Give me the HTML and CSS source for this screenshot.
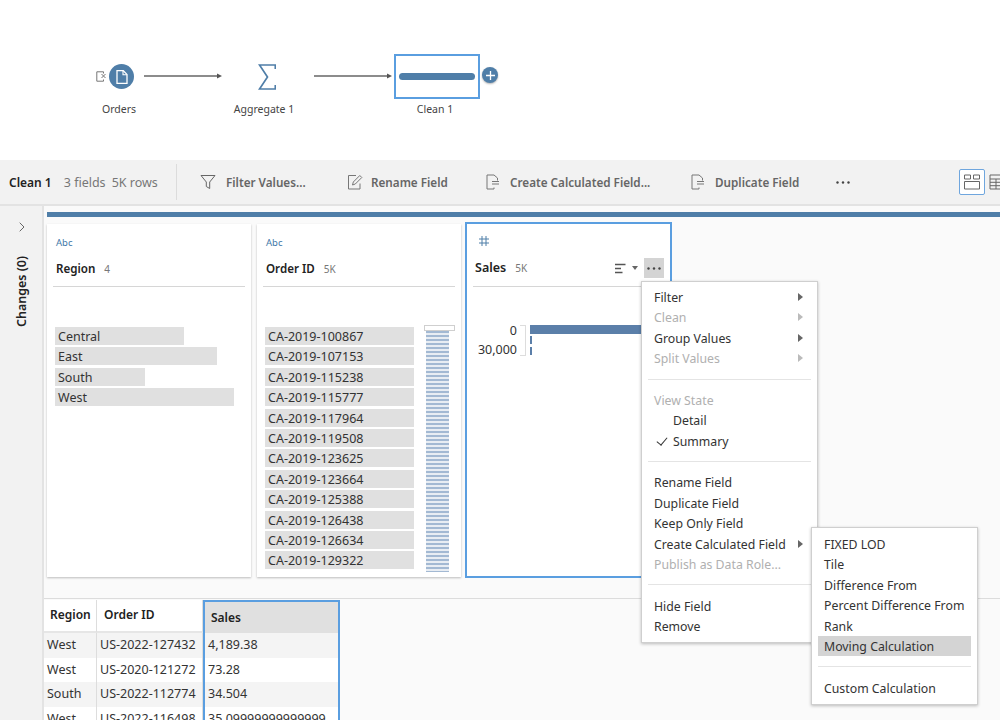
FILE: index.html
```html
<!DOCTYPE html>
<html lang="en">
<head>
<meta charset="utf-8">
<title>Clean 1</title>
<link rel="stylesheet" href="styles.css">
</head>
<body>
<div class="app">
  <section class="flow">
    <svg class="node-input" viewBox="0 0 11 11" width="11" height="11"><path d="M7.500 2.500V.8H.8v9.400h6.700V8.500" fill="none" stroke="#777" stroke-width="1"/><path d="M5.500 3l4 4M9.500 3l-4 4" stroke="#777" stroke-width="1" fill="none"/></svg>
    <div class="node-circle"><svg viewBox="0 0 12 14" width="12" height="14"><path d="M1 .7h6.300L11 4.400v8.900H1z" fill="none" stroke="#fff" stroke-width="1.300"/><path d="M7 .7v4h4" fill="none" stroke="#fff" stroke-width="1.100"/></svg></div>
    <svg class="edge edge-a" viewBox="0 0 78 8" width="78" height="8"><path d="M0 4h75" stroke="#666" stroke-width="1.500"/><path d="M73 1.500L78 4l-5 2.500z" fill="#555"/></svg>
    <svg class="node-sigma" viewBox="0 0 18 26" width="18" height="26"><path d="M17.300 5V1H1.500L9.500 13 1.500 25h15.800v-4" fill="none" stroke="#4f7ea8" stroke-width="1.700"/></svg>
    <svg class="edge edge-b" viewBox="0 0 78 8" width="78" height="8"><path d="M0 4h75" stroke="#666" stroke-width="1.500"/><path d="M73 1.500L78 4l-5 2.500z" fill="#555"/></svg>
    <div class="node-clean"><div class="node-clean-bar"></div></div>
    <div class="node-plus"><svg viewBox="0 0 9 9" width="9" height="9"><path d="M4.500 0v9M0 4.500h9" stroke="#fff" stroke-width="1.300"/></svg></div>
    <span class="node-label label-orders">Orders</span>
    <span class="node-label label-aggregate">Aggregate 1</span>
    <span class="node-label label-clean">Clean 1</span>
  </section>

  <header class="toolbar">
    <div class="step-info"><strong>Clean 1</strong><span>3 fields</span><span>5K rows</span></div>
    <div class="tool tool-filter"><svg viewBox="0 0 16 16" width="16" height="16"><path d="M1 1.500h14L9.700 8v6.500l-3.400-2V8z" fill="none" stroke="#666" stroke-width="1"/></svg><span>Filter Values...</span></div>
    <div class="tool tool-rename"><svg viewBox="0 0 16 16" width="16" height="16"><path d="M13 9.500v5.500H1.500V1.500H9" fill="none" stroke="#777" stroke-width="1"/><path d="M5.500 11l.8-3L12.800 1.500l2 2L8.300 10z" fill="none" stroke="#777" stroke-width="1"/></svg><span>Rename Field</span></div>
    <div class="tool tool-calc"><svg viewBox="0 0 14 16" width="14" height="16"><path d="M8 1H1v14h7v-1.500M8 1l3.500 3v2.500" fill="none" stroke="#777" stroke-width="1"/><path d="M6 7.500h7M6 10h7" stroke="#777" stroke-width="1"/></svg><span>Create Calculated Field...</span></div>
    <div class="tool tool-dup"><svg viewBox="0 0 14 16" width="14" height="16"><path d="M8 1H1v14h7v-1.500M8 1l3.500 3v2.500" fill="none" stroke="#777" stroke-width="1"/><path d="M6 7.500h7M6 10h7" stroke="#777" stroke-width="1"/></svg><span>Duplicate Field</span></div>
    <div class="tool-more"><svg viewBox="0 0 14 3" width="14" height="3"><circle cx="1.500" cy="1.500" r="1.200" fill="#444"/><circle cx="7" cy="1.500" r="1.200" fill="#444"/><circle cx="12.500" cy="1.500" r="1.200" fill="#444"/></svg></div>
    <div class="view-toggle">
      <div class="view-btn view-btn-on"><svg viewBox="0 0 18 16" width="18" height="16"><path d="M1.500 1h6v4h-6zM10.500 1h6v4h-6zM1.500 7.500h15V15h-15z" fill="none" stroke="#666" stroke-width="1"/></svg></div>
      <div class="view-btn"><svg viewBox="0 0 18 16" width="18" height="16"><path d="M1 1h16v14H1zM1 5h16M1 8.300h16M1 11.700h16M7 5v10" fill="none" stroke="#666" stroke-width="1"/></svg></div>
    </div>
  </header>

  <div class="workspace">
    <aside class="changes">
      <svg class="chevron" viewBox="0 0 6 10" width="6" height="10"><path d="M.7.7L5 5 .7 9.300" fill="none" stroke="#666" stroke-width="1"/></svg>
      <span class="changes-label">Changes (0)</span>
    </aside>
    <main class="content">
      <div class="step-bar"></div>
      <div class="cards">
        <article class="card">
          <div class="type">Abc</div>
          <div class="card-head"><b>Region</b><span>4</span></div>
          <div class="values">
            <div class="value" style="width:129px">Central</div>
            <div class="value" style="width:162px">East</div>
            <div class="value" style="width:90px">South</div>
            <div class="value" style="width:179px">West</div>
          </div>
        </article>
        <article class="card card-order">
          <div class="type">Abc</div>
          <div class="card-head"><b>Order ID</b><span>5K</span></div>
          <div class="values">
            <div class="value value-id">CA-2019-100867</div>
            <div class="value value-id">CA-2019-107153</div>
            <div class="value value-id">CA-2019-115238</div>
            <div class="value value-id">CA-2019-115777</div>
            <div class="value value-id">CA-2019-117964</div>
            <div class="value value-id">CA-2019-119508</div>
            <div class="value value-id">CA-2019-123625</div>
            <div class="value value-id">CA-2019-123664</div>
            <div class="value value-id">CA-2019-125388</div>
            <div class="value value-id">CA-2019-126438</div>
            <div class="value value-id">CA-2019-126634</div>
            <div class="value value-id">CA-2019-129322</div>
          </div>
          <div class="scroll-strip"></div>
          <div class="scroll-thumb"></div>
        </article>
        <article class="card card-selected">
          <div class="type type-hash"><svg viewBox="0 0 10 10" width="10" height="10"><path d="M3 0v10M7 0v10M0 3h10M0 7h10" stroke="#4f7ea8" stroke-width="1"/></svg></div>
          <div class="card-head card-head-sel"><b>Sales</b><span>5K</span>
            <div class="card-actions">
              <svg class="sort-icon" viewBox="0 0 11 11" width="11" height="11"><path d="M0 1.500h10.500M0 5.500h6M0 9.500h7.500" stroke="#555" stroke-width="1.300"/></svg>
              <svg class="caret-icon" viewBox="0 0 6 4" width="6" height="4"><path d="M0 0h6L3 4z" fill="#666"/></svg>
              <div class="more-btn"><svg viewBox="0 0 14 3" width="14" height="3"><circle cx="1.500" cy="1.500" r="1.200" fill="#444"/><circle cx="7" cy="1.500" r="1.200" fill="#444"/><circle cx="12.500" cy="1.500" r="1.200" fill="#444"/></svg></div>
            </div>
          </div>
          <div class="hist">
            <div class="hist-labels"><span>0</span><span>30,000</span></div>
            <div class="hist-bracket"></div>
            <div class="hist-bars"><div class="hist-bar-main"></div><div class="hist-bar-small"></div><div class="hist-bar-small"></div></div>
          </div>
        </article>
      </div>
      <div class="table-pane">
        <div class="table">
          <div class="th">Region</div><div class="th th-order">Order ID</div><div class="th th-sales">Sales</div>
          <div class="td alt">West</div><div class="td alt">US-2022-127432</div><div class="td alt td-sales">4,189.38</div>
          <div class="td">West</div><div class="td">US-2020-121272</div><div class="td td-sales">73.28</div>
          <div class="td alt">South</div><div class="td alt">US-2022-112774</div><div class="td alt td-sales">34.504</div>
          <div class="td">West</div><div class="td">US-2022-116498</div><div class="td td-sales">35.09999999999999</div>
        </div>
      </div>
    </main>
  </div>

  <nav class="menu menu-main">
    <div class="mi arrow">Filter</div>
    <div class="mi off arrow">Clean</div>
    <div class="mi arrow">Group Values</div>
    <div class="mi off arrow">Split Values</div>
    <div class="sep"></div>
    <div class="mi off">View State</div>
    <div class="mi indent">Detail</div>
    <div class="mi indent checked">Summary</div>
    <div class="sep"></div>
    <div class="mi">Rename Field</div>
    <div class="mi">Duplicate Field</div>
    <div class="mi">Keep Only Field</div>
    <div class="mi arrow">Create Calculated Field</div>
    <div class="mi off">Publish as Data Role...</div>
    <div class="sep"></div>
    <div class="mi">Hide Field</div>
    <div class="mi">Remove</div>
  </nav>
  <nav class="menu menu-sub">
    <div class="mi">FIXED LOD</div>
    <div class="mi">Tile</div>
    <div class="mi">Difference From</div>
    <div class="mi">Percent Difference From</div>
    <div class="mi">Rank</div>
    <div class="mi hover">Moving Calculation</div>
    <div class="sep"></div>
    <div class="mi">Custom Calculation</div>
  </nav>
</div>
</body>
</html>
```
FILE: styles.css
```css
* { box-sizing: border-box; }
html, body { margin: 0; height: 100%; overflow: hidden; }
body { font-family: "Noto Sans", "Open Sans", sans-serif; font-size: 12.500px; color: #2b2b2b; background: #fff; }
.app { position: relative; width: 1000px; height: 720px; overflow: hidden; display: flex; flex-direction: column; }

/* flow canvas */
.flow { position: relative; height: 160px; flex: none; background: #fff; }
.node-input { position: absolute; left: 96px; top: 71px; }
.node-circle { position: absolute; left: 109px; top: 64px; width: 25px; height: 25px; border-radius: 50%; background: #4f7ea8; display: flex; align-items: center; justify-content: center; }
.edge { position: absolute; top: 72px; }
.edge-a { left: 144px; }
.edge-b { left: 314px; }
.node-sigma { position: absolute; left: 258px; top: 64px; }
.node-clean { position: absolute; left: 394px; top: 54px; width: 86px; height: 45px; border: 2px solid #5a9ee0; display: flex; align-items: center; justify-content: center; background: #fff; }
.node-clean-bar { width: 76px; height: 7px; border-radius: 4px; background: #4f7ea8; }
.node-plus { position: absolute; left: 482px; top: 67px; width: 16px; height: 16px; border-radius: 50%; background: #4f7ea8; display: flex; align-items: center; justify-content: center; box-shadow: 0 1px 2px rgba(0,0,0,.3); }
.node-label { position: absolute; top: 101px; font-size: 10.500px; line-height: 16px; color: #444; transform: translateX(-50%); white-space: nowrap; }
.label-orders { left: 119px; }
.label-aggregate { left: 264px; }
.label-clean { left: 435px; }

/* toolbar */
.toolbar { height: 46px; flex: none; background: #f2f2f2; border-bottom: 2px solid #e3e3e3; display: flex; align-items: center; padding-left: 9px; }
.toolbar > * { flex: none; }
.step-info { width: 168px; height: 36px; display: flex; align-items: center; border-right: 1px solid #dcdcdc; font-size: 12.500px; color: #777; gap: 6px; }
.step-info strong { color: #222; font-weight: 600; margin-right: 6px; font-size: 12px; }
.tool { display: flex; align-items: center; gap: 10px; font-weight: 600; font-size: 11.700px; color: #666; white-space: nowrap; }
.tool-filter { margin-left: 23px; width: 147px; }
.tool-rename { width: 139px; gap: 8px; }
.tool-calc { width: 205px; }
.tool-dup { width: 145px; }
.tool-more { width: 123px; display: flex; align-items: center; }
.view-toggle { display: flex; height: 26px; }
.view-btn { width: 26px; height: 26px; display: flex; align-items: center; justify-content: center; }
.view-btn-on { border: 1px solid #6fa6de; border-radius: 2px; background: #fff; }

/* workspace */
.workspace { flex: 1; min-height: 0; display: flex; }
.changes { width: 44px; flex: none; background: #f2f2f2; border-right: 2px solid #e3e3e3; display: flex; flex-direction: column; align-items: center; padding: 16px 0 0 2px; }
.changes-label { writing-mode: vertical-rl; transform: rotate(180deg); font-weight: 600; font-size: 12.500px; color: #222; margin-top: 24px; line-height: 14px; }
.content { flex: 1; min-width: 0; background: #fafafa; padding-top: 6px; display: flex; flex-direction: column; }
.step-bar { height: 5px; flex: none; margin-left: 3px; background: #4f7ea8; }
.cards { display: flex; gap: 6px; margin-top: 6px; height: 355px; flex: none; padding-left: 3px; align-items: flex-start; }
.card { position: relative; width: 204px; height: 353px; margin-top: 1px; background: #fff; box-shadow: 0 1px 2px rgba(0,0,0,.25); padding: 0 6px; flex: none; }
.card-selected { width: 207px; height: 356px; margin: -1px 0 0 -2px; border: 2px solid #5a9ee0; box-shadow: none; }
.type { height: 14px; margin-top: 12px; padding-left: 3px; font-size: 9.500px; line-height: 14px; color: #3f78a8; }
.type-hash { margin-top: 12px; padding-left: 6px; }
.card-head { height: 37px; display: flex; align-items: flex-start; padding: 11px 3px 0; border-bottom: 1px solid #d6d6d6; gap: 9px; }
.card-head-sel { padding: 0 0 0 2px; align-items: center; }
.card-head-sel b { font-size: 12.500px; }
.card-head b { font-weight: 600; font-size: 11.600px; line-height: 16px; color: #222; }
.card-head-sel b { font-size: 12.500px; }
.card-head span { font-size: 10px; line-height: 16px; color: #777; }
.card-actions { margin-left: auto; display: flex; align-items: center; }
.sort-icon { margin-right: -1px; }
.caret-icon { margin-left: 7px; }
.more-btn { width: 20px; height: 20px; margin-left: 6px; background: #d4d4d4; display: flex; align-items: center; justify-content: center; }
.values { padding: 40px 2px 0; display: flex; flex-direction: column; gap: 2.400px; }
.value { height: 18px; background: #e0e0e0; padding-left: 3px; font-size: 12.500px; line-height: 19px; color: #333; white-space: nowrap; }
.value-id { width: 149px; }
.scroll-strip { position: absolute; left: 169px; top: 103px; width: 23px; height: 245px; background: repeating-linear-gradient(to bottom, #a3b9d3 0, #a3b9d3 2.500px, #e8edf3 2.500px, #e8edf3 4px); }
.scroll-thumb { position: absolute; left: 167px; top: 101px; width: 31px; height: 6px; border: 1px solid #cfcfcf; background: #fff; }
.hist { display: flex; padding-top: 34px; }
.hist-labels { width: 42px; margin-left: 2px; display: flex; flex-direction: column; align-items: flex-end; font-size: 12.500px; line-height: 19px; color: #333; }
.hist-bracket { width: 6px; height: 31px; margin: 4px 0 0 3px; border: 1px solid #ddd; border-left: 0; }
.hist-bars { margin: 4px 0 0 4px; display: flex; flex-direction: column; }
.hist-bar-main { width: 125px; height: 9px; background: #5b7fa9; margin-bottom: 2px; }
.hist-bar-small { width: 2px; height: 8px; background: #5b7fa9; margin-bottom: 3px; }

/* table */
.table-pane { margin-top: 20px; padding-top: 1px; flex: 1; min-height: 0; border-top: 1px solid #dcdcdc; }
.table { width: 296px; display: grid; grid-template-columns: 53px 106px 137px; grid-auto-rows: 24.500px; grid-template-rows: 33px; background: #fff; }
.th { font-weight: 600; font-size: 12px; color: #222; padding: 7px 0 0 6px; line-height: 16px; border-right: 1px solid #ddd; border-bottom: 2px solid #e6e6e6; background: #fff; }
.th-order { padding-left: 7px; }
.th-sales { background: #e0e0e0; border: 2px solid #5a9ee0; border-bottom: 0; padding: 8px 0 0 6px; }
.td { padding-left: 3px; font-size: 12.500px; line-height: 24.500px; color: #333; border-right: 1px solid #ddd; white-space: nowrap; overflow: hidden; background: #fff; }
.alt { background: #f4f4f4; }
.td-sales { border-left: 2px solid #5a9ee0; border-right: 2px solid #5a9ee0; }

/* menus */
.menu { position: absolute; background: #fff; border: 1px solid #cfcfcf; box-shadow: 0 1px 3px rgba(0,0,0,.25); font-size: 12.300px; color: #333; }
.menu-main { left: 641px; top: 281px; width: 177px; padding: 5px 0 6px; }
.menu-sub { left: 811px; top: 527px; width: 167px; padding: 6px; }
.mi { position: relative; height: 20.400px; line-height: 21.500px; padding-left: 12px; white-space: nowrap; }
.menu-sub .mi { padding-left: 6px; }
.off { color: #b0b0b0; }
.indent { padding-left: 31px; }
.checked::before { content: ""; position: absolute; left: 17px; top: 4px; width: 5px; height: 9px; border: solid #333; border-width: 0 1.500px 1.500px 0; transform: rotate(40deg); }
.arrow::after { content: ""; position: absolute; left: 156px; top: 6px; border-left: 5px solid #666; border-top: 4px solid transparent; border-bottom: 4px solid transparent; }
.off.arrow::after { border-left-color: #bbb; }
.hover { background: #d4d4d4; }
.sep { height: 21.300px; position: relative; }
.sep::before { content: ""; position: absolute; left: 6px; right: 6px; top: 10px; height: 1px; background: #e4e4e4; }
.menu-sub .sep::before { left: 0; right: 0; }
```
